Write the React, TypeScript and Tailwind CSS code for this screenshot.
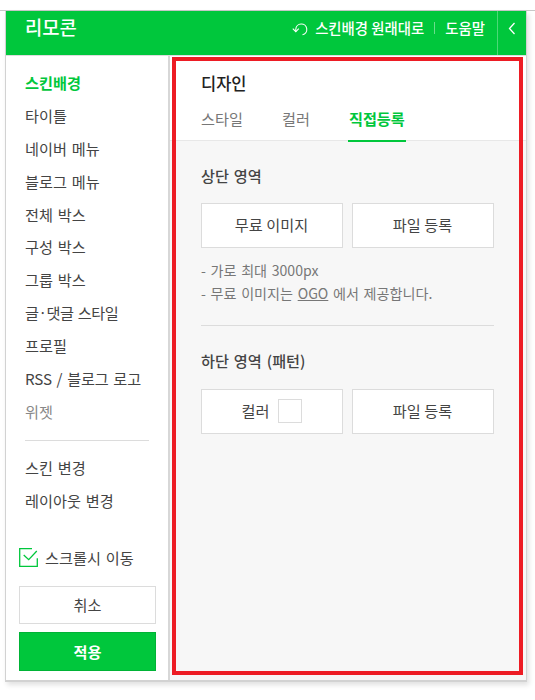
import clsx from "clsx"

const MENUS = [
  "스킨배경",
  "타이틀",
  "네이버 메뉴",
  "블로그 메뉴",
  "전체 박스",
  "구성 박스",
  "그룹 박스",
  "글·댓글 스타일",
  "프로필",
  "RSS / 블로그 로고",
  "위젯",
]

const SkinButton = ({ children }: { children: React.ReactNode }) => (
  <button className="flex h-[45px] w-[142px] items-center justify-center border border-[#dcdcdc] bg-white pr-px pb-[3px]">
    {children}
  </button>
)

const Header = () => (
  <div className="flex h-11 bg-[#00c73c] text-white">
    <h1 className="ml-[19px] grow text-[18.8px] leading-[31px] font-medium">리모콘</h1>
    <div className="flex h-[34px] items-center font-medium">
      <svg className="mt-[3px] mr-[7px]" width="16" height="13" viewBox="0 0 16 13" fill="none" stroke="white" strokeWidth="1.1">
        <path d="M3.8 8.6V6.2a5.5 5.5 0 1 1 6.7 5.6" />
        <path d="M.8 5.6 3.8 8.6l3-3" />
      </svg>
      <button className="text-[14.4px]">스킨배경 원래대로</button>
      <span className="mx-[10px] h-3 w-px bg-[#6bdd8c]" />
      <button className="text-[14.4px]">도움말</button>
    </div>
    <button className="ml-3 flex w-[29px] justify-center border-l border-[#4dd877] pt-[11px]">
      <svg width="8" height="13" viewBox="0 0 8 13" fill="none" stroke="white" strokeWidth="1.3">
        <path d="M6.5 1 1.5 6.5l5 5.5" />
      </svg>
    </button>
  </div>
)

const Sidebar = () => (
  <div className="flex w-[164px] shrink-0 flex-col border-r-2 border-[#d7d7d7] bg-white">
    <ul className="mt-[10px] ml-[19px]">
      {MENUS.map((menu, index) => (
        <li
          key={menu}
          className={clsx(
            "h-[32.9px] leading-[33px]",
            index === 0 && "font-bold text-[#00c73c]",
            menu === "글·댓글 스타일" && "tracking-[-0.5px]",
            menu === "RSS / 블로그 로고" && "tracking-[-0.15px]",
            menu === "위젯" && "text-[#888]"
          )}
        >
          {menu}
        </li>
      ))}
    </ul>
    <div className="mt-[12px] ml-[19px] h-px w-[124px] bg-[#dcdcdc]" />
    <ul className="mt-[10px] ml-[19px]">
      <li className="h-[33px] leading-[33px]">스킨 변경</li>
      <li className="h-[33px] leading-[33px]">레이아웃 변경</li>
    </ul>
    {/* scroll option */}
    <div className="mt-[30px] ml-[13px] flex h-[22px] items-center">
      <svg width="19" height="19" viewBox="0 0 19 19" fill="none" stroke="#00c73c" strokeWidth="1.3">
        <path d="M13 .7H.7v17.6h17.6V10.2" />
        <path d="M4.7 7 9.7 11.7 17.8 3" />
      </svg>
      <span className="ml-[7px]">스크롤시 이동</span>
    </div>
    <button className="mt-[17px] ml-[13px] h-[38px] w-[137px] border border-[#dcdcdc] leading-[33px]">취소</button>
    <button className="mt-2 ml-[13px] h-[39px] w-[137px] border border-[#00b336] bg-[#00c73c] leading-[34px] font-bold text-white">적용</button>
  </div>
)

const Design = () => (
  <div className="grow bg-[#f7f7f7]">
    <div className="h-[85px] border-b border-[#e8e8e8] bg-white pl-[31px]">
      <h2 className="pt-[15px] text-[16.5px] leading-6 font-medium text-[#222]">디자인</h2>
      <div className="mt-[6px] flex h-[41px] leading-[34px] text-[#777]">
        <button className="mr-[39px] flex">스타일</button>
        <button className="mr-[38px] flex">컬러</button>
        <button className="flex h-[41px] w-[58px] justify-center border-b-2 border-[#00c73c] font-bold text-[#00c73c]">직접등록</button>
      </div>
    </div>
    <div className="ml-[31px] w-[293px]">
      <h3 className="pt-[22px] leading-6 font-medium">상단 영역</h3>
      <div className="mt-4 flex justify-between">
        <SkinButton>무료 이미지</SkinButton>
        <SkinButton>파일 등록</SkinButton>
      </div>
      <div className="mt-[11px] text-[14.1px] leading-[22.5px] text-[#777]">
        <p>- 가로 최대 3000px</p>
        <p>- 무료 이미지는 <a className="underline">OGO</a> 에서 제공합니다.</p>
      </div>
      <div className="mt-[21px] h-px bg-[#dcdcdc]" />
      <h3 className="mt-[22px] leading-6 font-medium">하단 영역 (패턴)</h3>
      <div className="mt-[17px] flex justify-between">
        <SkinButton>
          <span className="ml-px">컬러</span>
          <span className="mt-0.5 ml-[9px] h-6 w-6 border border-[#dcdcdc]" />
        </SkinButton>
        <SkinButton>파일 등록</SkinButton>
      </div>
    </div>
  </div>
)

export default function App() {
  return (
    <div className="h-[700px] w-[535px] bg-white pt-[10px] font-['Noto_Sans_CJK_KR',sans-serif] text-[15.2px] [word-spacing:1.5px] text-[#444]">
      <div className="border-t border-[#c8c8c8]">
        <div className="relative ml-[5px] flex h-[671px] w-[522px] flex-col border-x border-b-2 border-[#d2d2d2] shadow-[2px_3px_5px_rgba(0,0,0,0.12)]">
          <Header />
          <div className="flex grow border-t border-[#ddd]">
            <Sidebar />
            <Design />
          </div>
          {/* highlight */}
          <div className="pointer-events-none absolute top-[46px] left-[166px] h-[618px] w-[351px] border-4 border-[#ed1c24]" />
        </div>
      </div>
    </div>
  )
}
